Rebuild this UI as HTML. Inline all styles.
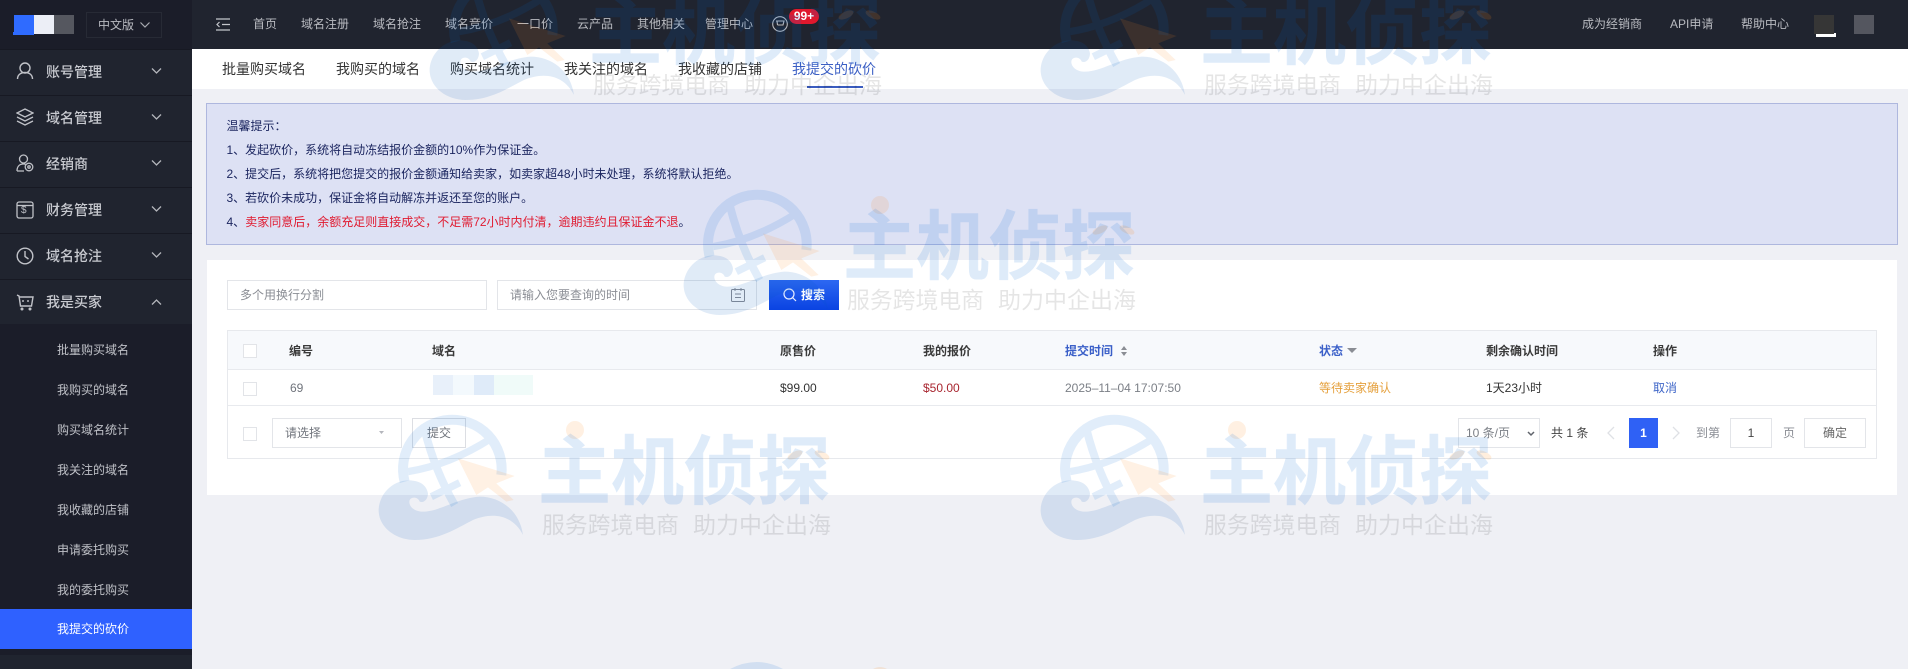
<!DOCTYPE html>
<html lang="zh-CN"><head><meta charset="utf-8"><title>我提交的砍价</title>
<style>
html,body{margin:0;padding:0;width:1908px;height:669px;overflow:hidden;background:#eff0f5}
body{position:relative;font-family:"Liberation Sans","Noto Sans CJK SC",sans-serif;font-size:12px;color:#333}
.a{position:absolute;box-sizing:border-box}
.t{position:absolute;white-space:nowrap;line-height:20px;height:20px}
.nav{color:#b9bbc1;font-size:12px}
.m{color:#c8cad0;font-size:14px;font-weight:500;left:46px}
.s{color:#bfc1c7;font-size:12px;left:57px}
.tab{font-size:14px;color:#333;top:59px}
.n{font-size:12px;color:#1c2660;left:226.5px}
.th{font-size:12px;font-weight:700;color:#3a3a3a;top:341px}
.td{font-size:12px;top:378px}
.cb{position:absolute;width:14px;height:14px;border:1px solid #e2e4e8;left:243px;background:#fff;box-sizing:border-box}
.ip{position:absolute;border:1px solid #e3e5e9;background:#fff;box-sizing:border-box}
svg{position:absolute;overflow:hidden}
</style></head><body>

<!-- sidebar -->
<div class="a" style="left:0;top:0;width:192px;height:669px;background:#1b1d29"></div>
<div class="a" style="left:14px;top:15px;width:20px;height:19px;background:#2f6bff"></div>
<div class="a" style="left:13px;top:32px;width:21px;height:3px;background:#2f6bff"></div>
<div class="a" style="left:34px;top:15px;width:20px;height:19px;background:#eceef6"></div>
<div class="a" style="left:54px;top:15px;width:20px;height:19px;background:#55575f"></div>
<div class="a" style="left:86px;top:12px;width:76px;height:26px;border:1px solid #272a35"></div>
<div class="t" style="left:98px;top:15px;font-size:12px;color:#b8bac0">中文版</div>
<svg style="left:139px;top:21px" width="12" height="8" fill="none" stroke="#a8aab0" stroke-width="1.2"><path d="M1.5 1.5 6 6l4.500-4.500"/></svg>

<div class="a" style="left:0;top:49px;width:192px;height:275px;background:#20242f"></div>
<div class="a" style="left:0;top:49px;width:192px;height:1px;background:#171923"></div>
<div class="a" style="left:0;top:95px;width:192px;height:1px;background:#171923"></div>
<div class="a" style="left:0;top:141px;width:192px;height:1px;background:#171923"></div>
<div class="a" style="left:0;top:187px;width:192px;height:1px;background:#171923"></div>
<div class="a" style="left:0;top:233px;width:192px;height:1px;background:#171923"></div>
<div class="a" style="left:0;top:279px;width:192px;height:1px;background:#171923"></div>

<div class="t m" style="top:62px">账号管理</div>
<div class="t m" style="top:108px">域名管理</div>
<div class="t m" style="top:154px">经销商</div>
<div class="t m" style="top:200px">财务管理</div>
<div class="t m" style="top:246px">域名抢注</div>
<div class="t m" style="top:292px">我是买家</div>

<svg style="left:16px;top:62px" width="18" height="18" fill="none" stroke="#c0c2c8" stroke-width="1.4"><circle cx="9" cy="6" r="5"/><path d="M1.500 17c0-4 3-6.500 7.500-6.500s7.500 2.500 7.500 6.500"/></svg>
<svg style="left:16px;top:108px" width="18" height="18" fill="none" stroke="#c0c2c8" stroke-width="1.3"><path d="M9 1 17 5 9 9 1 5Z"/><path d="M1 9l8 4 8-4M1 13l8 4 8-4"/></svg>
<svg style="left:16px;top:154px" width="18" height="18" fill="none" stroke="#c0c2c8" stroke-width="1.3"><circle cx="7.500" cy="5" r="4"/><path d="M1 17c0-4 2-7 6.500-7 1 0 2 .2 2.500.5M1 17h7"/><circle cx="13" cy="13" r="3.800"/><circle cx="13" cy="13" r="1.200"/></svg>
<svg style="left:16px;top:201px" width="18" height="18" fill="none" stroke="#c0c2c8" stroke-width="1.3"><rect x="1" y="1" width="16" height="16" rx="2"/><path d="M1 4.500h16"/></svg>
<div class="t" style="left:21px;top:201px;font-size:10px;color:#c0c2c8">$</div>
<svg style="left:16px;top:247px" width="18" height="18" fill="none" stroke="#c0c2c8" stroke-width="1.4"><circle cx="9" cy="9" r="7.800"/><path d="M9 4v5.500l3.500 2.500"/></svg>
<svg style="left:16px;top:293px" width="18" height="18" fill="none" stroke="#c0c2c8" stroke-width="1.4"><path d="M1 2l2 1 1.500 10h11L17 4H3"/><circle cx="6" cy="16" r=".8"/><circle cx="14" cy="16" r=".8"/><path d="M7 7v2M12 7v2"/></svg>

<svg style="left:150px;top:67px" width="13" height="9" fill="none" stroke="#b4b6bc" stroke-width="1.300"><path d="M2 1.500 6.500 6 11 1.500"/></svg>
<svg style="left:150px;top:113px" width="13" height="9" fill="none" stroke="#b4b6bc" stroke-width="1.300"><path d="M2 1.500 6.500 6 11 1.500"/></svg>
<svg style="left:150px;top:159px" width="13" height="9" fill="none" stroke="#b4b6bc" stroke-width="1.300"><path d="M2 1.500 6.500 6 11 1.500"/></svg>
<svg style="left:150px;top:205px" width="13" height="9" fill="none" stroke="#b4b6bc" stroke-width="1.300"><path d="M2 1.500 6.500 6 11 1.500"/></svg>
<svg style="left:150px;top:251px" width="13" height="9" fill="none" stroke="#b4b6bc" stroke-width="1.300"><path d="M2 1.500 6.500 6 11 1.500"/></svg>
<svg style="left:150px;top:298px" width="13" height="9" fill="none" stroke="#b4b6bc" stroke-width="1.300"><path d="M2 6.500 6.500 2 11 6.500"/></svg>

<div class="t s" style="top:340px">批量购买域名</div>
<div class="t s" style="top:380px">我购买的域名</div>
<div class="t s" style="top:420px">购买域名统计</div>
<div class="t s" style="top:460px">我关注的域名</div>
<div class="t s" style="top:500px">我收藏的店铺</div>
<div class="t s" style="top:540px">申请委托购买</div>
<div class="t s" style="top:580px">我的委托购买</div>
<div class="a" style="left:0;top:609px;width:192px;height:40px;background:#2f61ff"></div>
<div class="t s" style="top:619px;color:#fff">我提交的砍价</div>
<div class="a" style="left:0;top:655px;width:192px;height:14px;background:#20242f"></div>

<!-- top nav -->
<div class="a" style="left:192px;top:0;width:1716px;height:49px;background:#20242f"></div>
<svg style="left:216px;top:18px" width="15" height="13" fill="none" stroke="#c4c6cc" stroke-width="1.200"><path d="M0 1h14M6 6.500h8M0 12h14M3.500 4 1 6.500 3.500 9"/></svg>
<div class="t nav" style="left:253px;top:14px">首页</div>
<div class="t nav" style="left:301px;top:14px">域名注册</div>
<div class="t nav" style="left:373px;top:14px">域名抢注</div>
<div class="t nav" style="left:445px;top:14px">域名竞价</div>
<div class="t nav" style="left:517px;top:14px">一口价</div>
<div class="t nav" style="left:577px;top:14px">云产品</div>
<div class="t nav" style="left:637px;top:14px">其他相关</div>
<div class="t nav" style="left:705px;top:14px">管理中心</div>
<svg style="left:772px;top:16px" width="16" height="16" fill="none" stroke="#b9bbc1" stroke-width="1.100"><circle cx="8" cy="8" r="7.300"/><path d="M4 5h8l-1 4H5.500M5 5l.5 4"/></svg>
<div class="a" style="left:789px;top:9px;width:30px;height:15px;background:#e0182d;border-radius:8px"></div>
<div class="t" style="left:789px;top:6px;width:30px;text-align:center;color:#fff;font-size:12px;font-weight:700">99+</div>
<div class="t nav" style="left:1582px;top:14px">成为经销商</div>
<div class="t nav" style="left:1670px;top:14px">API申请</div>
<div class="t nav" style="left:1741px;top:14px">帮助中心</div>
<div class="a" style="left:1816px;top:33px;width:20px;height:4px;background:#fff"></div>
<div class="a" style="left:1814px;top:15px;width:20px;height:19px;background:#363636"></div>
<div class="a" style="left:1854px;top:15px;width:20px;height:19px;background:#54565f"></div>

<!-- tabs -->
<div class="a" style="left:192px;top:49px;width:1716px;height:40px;background:#fff"></div>
<div class="t tab" style="left:222px">批量购买域名</div>
<div class="t tab" style="left:336px">我购买的域名</div>
<div class="t tab" style="left:450px">购买域名统计</div>
<div class="t tab" style="left:564px">我关注的域名</div>
<div class="t tab" style="left:678px">我收藏的店铺</div>
<div class="t tab" style="left:792px;color:#3b5fc4">我提交的砍价</div>
<div class="a" style="left:807px;top:86px;width:56px;height:2px;background:#3a5cc0"></div>

<!-- notice -->
<div class="a" style="left:206px;top:103px;width:1692px;height:142px;background:#dde1f4;border:1px solid #aeb7de"></div>
<div class="t n" style="top:116px">温馨提示：</div>
<div class="t n" style="top:140px">1、发起砍价，系统将自动冻结报价金额的10%作为保证金。</div>
<div class="t n" style="top:164px">2、提交后，系统将把您提交的报价金额通知给卖家，如卖家超48小时未处理，系统将默认拒绝。</div>
<div class="t n" style="top:188px">3、若砍价未成功，保证金将自动解冻并返还至您的账户。</div>
<div class="t n" style="top:212px">4、<span style="color:#e01a30">卖家同意后，余额充足则直接成交，不足需72小时内付清，逾期违约且保证金不退</span>。</div>

<!-- card -->
<div class="a" style="left:207px;top:260px;width:1690px;height:235px;background:#fff"></div>
<div class="ip" style="left:227px;top:280px;width:260px;height:30px"></div>
<div class="t" style="left:240px;top:285px;color:#8a8d94">多个用换行分割</div>
<div class="ip" style="left:497px;top:280px;width:260px;height:30px"></div>
<div class="t" style="left:510px;top:285px;color:#8a8d94">请输入您要查询的时间</div>
<svg style="left:731px;top:288px" width="14" height="14" fill="none" stroke="#8a8d94" stroke-width="1"><rect x=".5" y="1.500" width="13" height="12" rx="1"/><path d="M4 0v3M10 0v3M4 6h6M4 9.500h6"/></svg>
<div class="a" style="left:769px;top:280px;width:70px;height:30px;background:linear-gradient(#2d68f2,#0a43e2)"></div>
<svg style="left:783px;top:288px" width="14" height="14" fill="none" stroke="#e8eeff" stroke-width="1.200"><circle cx="6" cy="6" r="5"/><path d="m9.500 9.500 3.500 3.500"/></svg>
<div class="t" style="left:801px;top:285px;color:#fff;font-weight:700">搜索</div>

<!-- table -->
<div class="a" style="left:227px;top:330px;width:1650px;height:129px;border:1px solid #e7e9ed"></div>
<div class="a" style="left:228px;top:331px;width:1648px;height:39px;background:#f7f9fc;border-bottom:1px solid #e8eaee"></div>
<div class="a" style="left:228px;top:405px;width:1648px;height:1px;background:#e8eaee"></div>
<div class="cb" style="top:344px"></div><div class="cb" style="top:382px"></div><div class="cb" style="top:427px"></div>
<div class="t th" style="left:289px">编号</div>
<div class="t th" style="left:432px">域名</div>
<div class="t th" style="left:780px">原售价</div>
<div class="t th" style="left:923px">我的报价</div>
<div class="t th" style="left:1065px;color:#3a5fc8">提交时间</div>
<svg style="left:1120px;top:345px" width="8" height="12" fill="#8a8d94"><path d="M4 1 7 5H1ZM4 11 1 7h6Z"/></svg>
<div class="t th" style="left:1319px;color:#3a5fc8">状态</div>
<svg style="left:1347px;top:348px" width="10" height="6" fill="#8a8d94"><path d="M0 0h10L5 5Z"/></svg>
<div class="t th" style="left:1486px">剩余确认时间</div>
<div class="t th" style="left:1653px">操作</div>

<div class="t td" style="left:290px;color:#70747c">69</div>
<div class="a" style="left:433px;top:375px;width:20px;height:20px;background:#e8f0fa"></div>
<div class="a" style="left:453px;top:375px;width:21px;height:20px;background:#f3f9fd"></div>
<div class="a" style="left:474px;top:375px;width:20px;height:20px;background:#dfebf9"></div>
<div class="a" style="left:494px;top:375px;width:39px;height:20px;background:#f0fbf9"></div>
<div class="t td" style="left:780px;color:#333">$99.00</div>
<div class="t td" style="left:923px;color:#a8252f">$50.00</div>
<div class="t td" style="left:1065px;color:#7b7f86">2025–11–04 17:07:50</div>
<div class="t td" style="left:1319px;color:#e5a03c">等待卖家确认</div>
<div class="t td" style="left:1486px;color:#333">1天23小时</div>
<div class="t td" style="left:1653px;color:#3f66c8">取消</div>

<div class="ip" style="left:272px;top:418px;width:130px;height:30px"></div>
<div class="t" style="left:285px;top:423px;color:#70747c">请选择</div>
<svg style="left:379px;top:431px" width="5" height="3" fill="#b4b6bc"><path d="M0 0h5L2.500 3Z"/></svg>
<div class="ip" style="left:412px;top:418px;width:54px;height:30px;border-color:#dcdee3;background:#fff"></div>
<div class="t" style="left:427px;top:423px;color:#70747c">提交</div>

<div class="ip" style="left:1458px;top:418px;width:82px;height:30px"></div>
<div class="t" style="left:1466px;top:423px;color:#7b7f86">10 条/页</div>
<svg style="left:1527px;top:431px" width="8" height="6" fill="none" stroke="#60646c" stroke-width="1.500"><path d="M1 1l3 3 3-3"/></svg>
<div class="t" style="left:1551px;top:423px;color:#444">共 1 条</div>
<svg style="left:1607px;top:426px" width="8" height="14" fill="none" stroke="#dfe1e5" stroke-width="1.300"><path d="M7 1 1 7l6 6"/></svg>
<div class="a" style="left:1629px;top:418px;width:29px;height:30px;background:#2f61f5"></div>
<div class="t" style="left:1629px;top:423px;width:29px;text-align:center;color:#fff;font-weight:700">1</div>
<svg style="left:1672px;top:426px" width="8" height="14" fill="none" stroke="#dfe1e5" stroke-width="1.300"><path d="M1 1l6 6-6 6"/></svg>
<div class="t" style="left:1696px;top:423px;color:#8a8d94">到第</div>
<div class="ip" style="left:1730px;top:418px;width:42px;height:30px"></div>
<div class="t" style="left:1730px;top:423px;width:42px;text-align:center;color:#444">1</div>
<div class="t" style="left:1783px;top:423px;color:#8a8d94">页</div>
<div class="ip" style="left:1804px;top:418px;width:62px;height:30px"></div>
<div class="t" style="left:1804px;top:423px;width:62px;text-align:center;color:#666">确定</div>

<!-- watermark overlay -->
<svg style="left:0;top:0;width:1908px;height:669px;pointer-events:none" width="1908" height="669" viewBox="0 0 1908 669" font-family="'Noto Sans CJK SC',sans-serif">
<defs>
<g id="lg" transform="scale(.3333) translate(-55,-45)">
<g fill="none" stroke="rgb(0,105,215)" opacity=".115">
<path d="M135 245A148 148 0 1 1 425 225" stroke-width="30"/>
<path d="M195 90Q225 210 285 315" stroke-width="24"/>
<path d="M145 215Q270 195 395 115" stroke-width="22"/>
<path d="M215 290 300 248" stroke-width="22"/>
</g>
<path d="M490 405C480 330 420 290 360 290C290 295 240 335 190 335C160 335 145 315 150 300C155 290 175 290 180 305C195 310 205 295 205 280C200 250 170 238 135 242C85 250 55 295 57 335C60 385 110 420 165 420C240 420 290 385 340 360C400 335 460 345 490 405Z" fill="rgb(0,90,190)" fill-opacity=".12"/>
<path d="M295 175 465 228 410 250 462 300 440 305 385 262 350 285Z" fill="rgb(255,140,30)" fill-opacity=".12"/>
</g>
<g id="dec">
<circle cx="197" cy="15" r="9" fill="rgb(255,140,30)" fill-opacity=".13"/>
<ellipse cx="417" cy="40" rx="8" ry="3.500" transform="rotate(-25 417 40)" fill="rgb(255,140,30)" fill-opacity=".15"/>
<ellipse cx="444" cy="40" rx="8" ry="3.500" transform="rotate(25 444 40)" fill="rgb(255,140,30)" fill-opacity=".15"/>
</g>
</defs>
<g transform="translate(429,-25)"><use href="#lg"/><use href="#dec"/><g opacity=".125"><text x="160" y="83" font-size="75" font-weight="700" fill="rgb(0,105,215)" stroke="rgb(0,105,215)" stroke-width=".6" textLength="292" lengthAdjust="spacingAndGlyphs">主机侦探</text></g><text x="164" y="118" font-size="23" fill="#000" fill-opacity=".1" textLength="137" lengthAdjust="spacingAndGlyphs">服务跨境电商</text><text x="315" y="118" font-size="23" fill="#000" fill-opacity=".1" textLength="138" lengthAdjust="spacingAndGlyphs">助力中企出海</text></g>
<g transform="translate(1040,-25)"><use href="#lg"/><use href="#dec"/><g opacity=".125"><text x="160" y="83" font-size="75" font-weight="700" fill="rgb(0,105,215)" stroke="rgb(0,105,215)" stroke-width=".6" textLength="292" lengthAdjust="spacingAndGlyphs">主机侦探</text></g><text x="164" y="118" font-size="23" fill="#000" fill-opacity=".1" textLength="137" lengthAdjust="spacingAndGlyphs">服务跨境电商</text><text x="315" y="118" font-size="23" fill="#000" fill-opacity=".1" textLength="138" lengthAdjust="spacingAndGlyphs">助力中企出海</text></g>
<g transform="translate(683,190)"><use href="#lg"/><use href="#dec"/><g opacity=".125"><text x="160" y="83" font-size="75" font-weight="700" fill="rgb(0,105,215)" stroke="rgb(0,105,215)" stroke-width=".6" textLength="292" lengthAdjust="spacingAndGlyphs">主机侦探</text></g><text x="164" y="118" font-size="23" fill="#000" fill-opacity=".1" textLength="137" lengthAdjust="spacingAndGlyphs">服务跨境电商</text><text x="315" y="118" font-size="23" fill="#000" fill-opacity=".1" textLength="138" lengthAdjust="spacingAndGlyphs">助力中企出海</text></g>
<g transform="translate(378,415)"><use href="#lg"/><use href="#dec"/><g opacity=".125"><text x="160" y="83" font-size="75" font-weight="700" fill="rgb(0,105,215)" stroke="rgb(0,105,215)" stroke-width=".6" textLength="292" lengthAdjust="spacingAndGlyphs">主机侦探</text></g><text x="164" y="118" font-size="23" fill="#000" fill-opacity=".1" textLength="137" lengthAdjust="spacingAndGlyphs">服务跨境电商</text><text x="315" y="118" font-size="23" fill="#000" fill-opacity=".1" textLength="138" lengthAdjust="spacingAndGlyphs">助力中企出海</text></g>
<g transform="translate(1040,415)"><use href="#lg"/><use href="#dec"/><g opacity=".125"><text x="160" y="83" font-size="75" font-weight="700" fill="rgb(0,105,215)" stroke="rgb(0,105,215)" stroke-width=".6" textLength="292" lengthAdjust="spacingAndGlyphs">主机侦探</text></g><text x="164" y="118" font-size="23" fill="#000" fill-opacity=".1" textLength="137" lengthAdjust="spacingAndGlyphs">服务跨境电商</text><text x="315" y="118" font-size="23" fill="#000" fill-opacity=".1" textLength="138" lengthAdjust="spacingAndGlyphs">助力中企出海</text></g>
<path d="M730 669Q757 655 783 669Z" fill="rgb(0,105,215)" fill-opacity=".12"/>
<path d="M873 669Q880 665 887 669Z" fill="rgb(255,140,30)" fill-opacity=".14"/>
</svg>
</body></html>
